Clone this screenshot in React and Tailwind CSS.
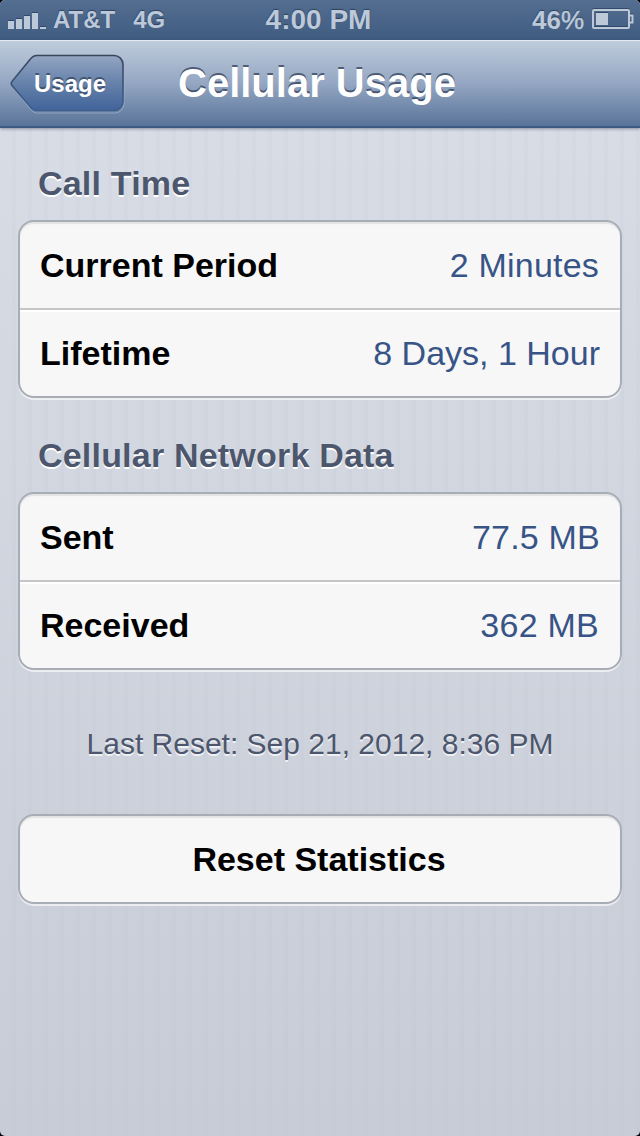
const callTime = [
  { label: 'Current Period', value: '2 Minutes', valueClass: 'mr-px tracking-[0.2px]' },
  { label: 'Lifetime', value: '8 Days, 1 Hour', valueClass: '' }
];

const networkData = [
  { label: 'Sent', value: '77.5 MB', valueClass: 'tracking-[0.2px]' },
  { label: 'Received', value: '362 MB', valueClass: 'mr-px tracking-[0.25px]' }
];

const SignalBars = () => (
  <svg width="40" height="20" viewBox="0 0 40 20" fill="#bdc9d9" className="drop-shadow-[0_-1px_0_rgba(30,50,80,0.55)]">
    <rect x="0" y="12" width="6" height="8" />
    <rect x="8" y="10" width="6" height="10" />
    <rect x="16" y="7" width="6" height="13" />
    <rect x="24" y="4" width="6" height="16" />
    <rect x="32" y="18" width="6" height="2" />
  </svg>
);

const Battery = () => (
  <svg width="42" height="20" viewBox="0 0 42 20" fill="none" className="drop-shadow-[0_-1px_0_rgba(30,50,80,0.55)]">
    <rect x="1" y="1" width="36" height="18" rx="1" stroke="#bdc9d9" strokeWidth="2" />
    <rect x="4" y="4" width="12" height="12" fill="#bdc9d9" />
    <path d="M38 6.500h2.500v7H38" stroke="#bdc9d9" strokeWidth="2" />
  </svg>
);

const StatusBar = () => (
  <div className="grid h-10 grid-cols-3 items-center bg-linear-to-b from-[#546e90] to-[#3f5c81] pr-[6px] pb-[2px] pl-2 font-bold text-[#bdc9d9] [text-shadow:0_-1px_1px_rgba(20,40,70,0.6)]">
    <div className="flex items-center">
      <SignalBars />
      <span className="ml-[5px] pt-[2px] text-[24px] leading-9">AT&amp;T</span>
      <span className="ml-[18px] pt-[2px] text-[24px] leading-9">4G</span>
    </div>
    <span className="mr-[5px] pt-[2px] text-center text-[28px] leading-9">4:00 PM</span>
    <div className="flex items-center justify-end">
      <span className="mr-[8px] pt-[2px] text-[26px] leading-9">
        46<span className="font-normal [-webkit-text-stroke:0.5px_#bdc9d9]">%</span>
      </span>
      <Battery />
    </div>
  </div>
);

const BackButton = ({ children }) => (
  <button type="button" className="relative h-[60px] w-[116px] shrink-0">
    <svg className="absolute inset-0" width="116" height="60" viewBox="0 0 116 60">
      <defs>
        <linearGradient id="back-fill" x1="0" y1="0" x2="0" y2="1">
          <stop offset="0" stopColor="#93a5c2" />
          <stop offset="0.5" stopColor="#6682aa" />
          <stop offset="1" stopColor="#41639a" />
        </linearGradient>
        <linearGradient id="back-edge" x1="0" y1="0" x2="0" y2="1">
          <stop offset="0" stopColor="#38465c" />
          <stop offset="1" stopColor="#3f5f90" />
        </linearGradient>
      </defs>
      <path d="M27 3h78a9 9 0 0 1 9 9v38a9 9 0 0 1-9 9H27q-4 0-7-4L3 33q-2-2 0-4L20 7q3-4 7-4z" fill="none" stroke="#a9b8d0" strokeOpacity="0.6" />
      <path d="M27 1.500h77a9 9 0 0 1 9 9v37a9 9 0 0 1-9 9H27q-4 0-7-4L2 31.500q-1.500-2 0-4L20 5.500q3-4 7-4z" fill="url(#back-fill)" stroke="url(#back-edge)" strokeWidth="1.600" />
    </svg>
    <span className="relative left-[2px] text-[24px] font-bold text-white [text-shadow:0_-2px_0_rgba(50,65,90,0.75)]">{children}</span>
  </button>
);

const NavBar = () => (
  <header className="relative flex h-[88px] items-center border-t border-b-2 border-t-[#e3eaf2] border-b-[#3d5a83] bg-linear-to-b from-[#bfccdc] via-[#94a6c2] to-[#597499] pl-[10px] shadow-[0_1px_3px_rgba(60,70,90,0.5)]">
    <BackButton>Usage</BackButton>
    <h1 className="mb-[2px] ml-[52px] text-[40px] font-bold whitespace-nowrap text-white [text-shadow:0_-2px_0_rgba(50,65,90,0.75)]">
      Cellular Usage
    </h1>
  </header>
);

const SectionTitle = ({ children }) => (
  <h2 className="pl-5 text-[34px] leading-[40px] font-bold tracking-[0.2px] text-[#4c566c] [text-shadow:0_2px_0_#fff]">{children}</h2>
);

const Card = ({ children }) => (
  <div className="overflow-hidden rounded-[16px] border-2 border-[#a8adb5] bg-[#f7f7f7] shadow-[0_2px_0_rgba(255,255,255,0.6),inset_0_2px_1px_rgba(0,0,0,0.08)]">
    {children}
  </div>
);

const UsageGroup = ({ rows }) => (
  <Card>
    {rows.map((row, i) => (
      <div
        key={row.label}
        className={`flex items-center justify-between px-5 text-[34px] ${
          i === 0 ? 'h-[86px]' : 'h-[88px] border-t-2 border-[#c6c6c6] shadow-[inset_0_2px_0_#fff]'
        }`}
      >
        <span className="font-bold text-black">{row.label}</span>
        <span className={`text-[#385487] ${row.valueClass}`}>{row.value}</span>
      </div>
    ))}
  </Card>
);

export default function App() {
  return (
    <div className="h-[1136px] w-[640px] overflow-hidden bg-black font-['Liberation_Sans',Arial,sans-serif]">
      <div className="flex h-full flex-col overflow-hidden rounded-[5px] bg-[repeating-linear-gradient(90deg,transparent_0_11px,rgba(150,165,195,0.05)_13px_16px,transparent_16px),linear-gradient(#d9dee7,#c8ccd6)]">
        <StatusBar />
        <NavBar />
        <main className="px-[18px] pt-[35px]">
          <SectionTitle>Call Time</SectionTitle>
          <div className="mt-[17px]">
            <UsageGroup rows={callTime} />
          </div>
          <div className="mt-[37px]">
            <SectionTitle>Cellular Network Data</SectionTitle>
          </div>
          <div className="mt-[17px]">
            <UsageGroup rows={networkData} />
          </div>
          <p className="mt-[54px] text-center text-[30px] leading-[40px] text-[#4c566c] [text-shadow:0_2px_0_rgba(255,255,255,0.7)]">
            Last Reset: Sep 21, 2012, 8:36 PM
          </p>
          <div className="mt-[50px]">
            <Card>
              <button type="button" className="h-[86px] w-full pr-[2px] text-[34px] font-bold text-black">
                Reset Statistics
              </button>
            </Card>
          </div>
        </main>
      </div>
    </div>
  );
}
